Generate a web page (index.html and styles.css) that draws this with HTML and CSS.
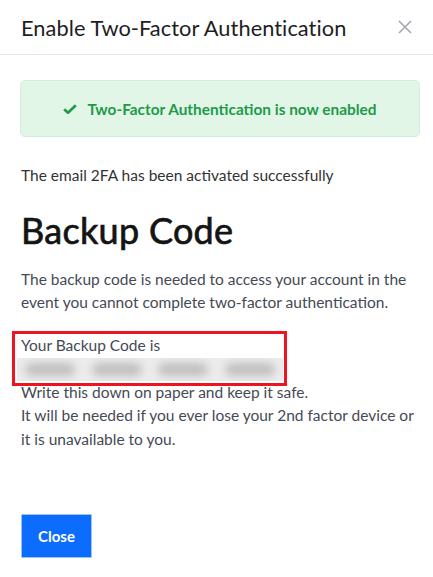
FILE: index.html
```html
<!DOCTYPE html>
<html lang="en">
<head>
<meta charset="utf-8">
<title>Enable Two-Factor Authentication</title>
<link rel="stylesheet" href="styles.css">
</head>
<body>
<div class="modal">
  <div class="modal-header">
    <h5 class="modal-title">Enable Two-Factor Authentication</h5>
    <button class="btn-x" aria-label="Close">
      <svg width="14" height="14" viewBox="0 0 14 14"><path d="M1 1L13 13M13 1L1 13" stroke="#a3a3ab" stroke-width="1.5" fill="none"/></svg>
    </button>
  </div>
  <div class="modal-body">
    <div class="alert">
      <svg class="check" width="14" height="10" viewBox="0 0 14 10"><path d="M1.2 5.2L5 8.8L12.8 1.2" stroke="#1f9a48" stroke-width="2.6" fill="none"/></svg>
      <span>Two-Factor Authentication is now enabled</span>
    </div>
    <p class="lead">The email 2FA has been activated successfully</p>
    <h2 class="heading">Backup Code</h2>
    <p class="para">The backup code is needed to access your account in the event you cannot complete two-factor authentication.</p>
    <div class="info">
      <div class="code-block">
        <div class="line">Your Backup Code is</div>
        <div class="code">
          <span class="blob"></span><span class="blob"></span><span class="blob"></span><span class="blob"></span>
        </div>
      </div>
      <div class="line">Write this down on paper and keep it safe.</div>
      <div class="line">It will be needed if you ever lose your 2nd factor device or it is unavailable to you.</div>
    </div>
  </div>
  <div class="modal-footer">
    <button class="btn-primary">Close</button>
  </div>
</div>
</body>
</html>
```
FILE: styles.css
```css
* { box-sizing: border-box; }
html, body { margin: 0; padding: 0; background: #ffffff; }
body { font-family: Lato, "Noto Sans", sans-serif; color: #333; }
.modal { width: 433px; height: 577px; display: flex; flex-direction: column; background: #fff; }
.modal-header {
  height: 55px; padding: 0 21px; border-bottom: 1px solid #e6e6e6;
  display: flex; align-items: center; justify-content: space-between;
}
.modal-title { margin: 0; font-size: 21.8px; font-weight: 400; color: #1e1e1e; letter-spacing: 0.05px; }
.btn-x { border: 0; background: none; padding: 0; width: 14px; height: 14px; display: flex; }
.modal-body { padding: 25px 13px 0 21px; }
.alert {
  margin-left: -1px; height: 57px; border: 1px solid #d3efdc; background: #e2f6e8; border-radius: 5px;
  display: flex; align-items: center; justify-content: center; gap: 10px;
  color: #1f9a48; font-size: 15.4px; font-weight: 700;
}
.check { margin-top: 1px; }
.lead { margin: 27px 0 0; font-size: 15.5px; line-height: 22px; color: #333; }
.heading {
  margin: 21px 0 0; font-size: 36px; line-height: 46px; font-weight: 400; color: #141414;
  letter-spacing: 0.3px; -webkit-text-stroke: 0.7px #141414;
}
.para { margin: 15px 0 0; font-size: 15.5px; line-height: 22.5px; color: #454a55; }
.info { margin-top: 21px; font-size: 15.5px; line-height: 23.5px; color: #454a55; }
.code-block { position: relative; width: 262px; }
.code-block::after {
  content: ""; position: absolute; left: -9px; top: -3px; right: -4px; bottom: -5px;
  border: 3px solid #ef1420;
}
.code {
  height: 23px; margin-left: -4px; background: #ececec; display: flex; align-items: center;
  justify-content: space-around; overflow: hidden;
}
.blob { width: 50px; height: 13px; background: #bfbfbf; filter: blur(4px); border-radius: 7px; }
.modal-footer { margin-top: auto; padding: 0 0 19px 21px; }
.btn-primary {
  width: 71px; height: 44px; background: #0b6cfd; border: 1px solid #9fc0ea; border-radius: 1px;
  color: #fff; font-family: Lato, "Noto Sans", sans-serif; font-size: 15px; font-weight: 700;
}
```
